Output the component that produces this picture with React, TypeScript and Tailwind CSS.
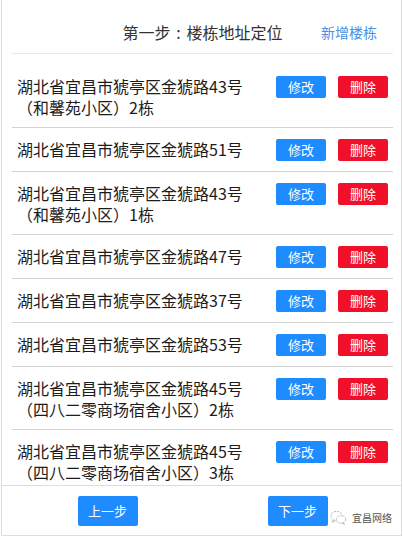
import React from 'react';

const buildings = [
  '湖北省宜昌市猇亭区金猇路43号（和馨苑小区）2栋',
  '湖北省宜昌市猇亭区金猇路51号',
  '湖北省宜昌市猇亭区金猇路43号（和馨苑小区）1栋',
  '湖北省宜昌市猇亭区金猇路47号',
  '湖北省宜昌市猇亭区金猇路37号',
  '湖北省宜昌市猇亭区金猇路53号',
  '湖北省宜昌市猇亭区金猇路45号（四八二零商场宿舍小区）2栋',
  '湖北省宜昌市猇亭区金猇路45号（四八二零商场宿舍小区）3栋',
];

const font = "font-['Microsoft_YaHei','Noto_Sans_CJK_SC',sans-serif]";

const WechatMark: React.FC = () => (
  <svg width="17" height="15" viewBox="0 0 17 15" fill="none" stroke="#b0b0b0" strokeWidth="0.9">
    <ellipse cx="6.5" cy="6" rx="5.6" ry="4.6" strokeDasharray="2 1" />
    <path d="M3.2 9.8 L2.4 12.2 L5.2 10.6" />
    <ellipse cx="11" cy="9.4" rx="4.6" ry="3.8" fill="#fff" strokeDasharray="2 1" />
    <path d="M13.6 12.6 L14.4 14.4 L12 13.1" />
  </svg>
);

const BuildingRow: React.FC<{ address: string; first?: boolean }> = ({ address, first }) => (
  <div className={`flex items-start justify-between border-b border-[#d4d4d4] pl-[5px] pr-[5px] pt-[11px] pb-[9px] ${first ? 'mt-[11px]' : ''}`}>
    <div className="min-h-[23px] w-[240px] text-[16px] leading-[21px] text-[#1c1c1c]">{address}</div>
    <div className="flex gap-[12px]">
      <button className="h-[22px] w-[50px] rounded-[2px] bg-[#1e8cff] text-[13px] leading-[22px] text-white">修改</button>
      <button className="h-[22px] w-[50px] rounded-[2px] bg-[#f0102a] text-[13px] leading-[22px] text-white">删除</button>
    </div>
  </div>
);

export default function App() {
  return (
    <div className={`relative ml-px flex h-[536px] w-[401px] flex-col border-x border-b border-[#dddddd] bg-white ${font}`}>
      <div className="flex-1 overflow-hidden pl-[10px] pr-[8px]">
        <div className="grid h-[54px] grid-cols-[1fr_auto_1fr] items-center border-b border-[#e6e9ef] pt-[11px]">
          <div />
          <div className="text-[16px] leading-[20px] text-[#333333]">
            第一步<span className="inline-block w-[1em] text-center">:</span>楼栋地址定位
          </div>
          <div className="flex justify-end pr-[16px]">
            <span className="text-[14px] leading-[20px] text-[#4a90e2]">新增楼栋</span>
          </div>
        </div>
        {buildings.map((b, i) => (
          <BuildingRow key={i} address={b} first={i === 0} />
        ))}
      </div>
      <div className="flex h-[50px] justify-center gap-[130px] border-t border-[#dddddd] pt-[10px] pl-[2px]">
        <button className="h-[30px] w-[60px] rounded-[2px] bg-[#1e8cff] text-[13px] text-white">上一步</button>
        <button className="h-[30px] w-[60px] rounded-[2px] bg-[#1e8cff] text-[13px] text-white">下一步</button>
      </div>
      <div className="absolute bottom-[10px] right-[9px] flex items-center gap-[5px]">
        <WechatMark />
        <span className="text-[10px] leading-[14px] text-[#555555]">宜昌网络</span>
      </div>
    </div>
  );
}
